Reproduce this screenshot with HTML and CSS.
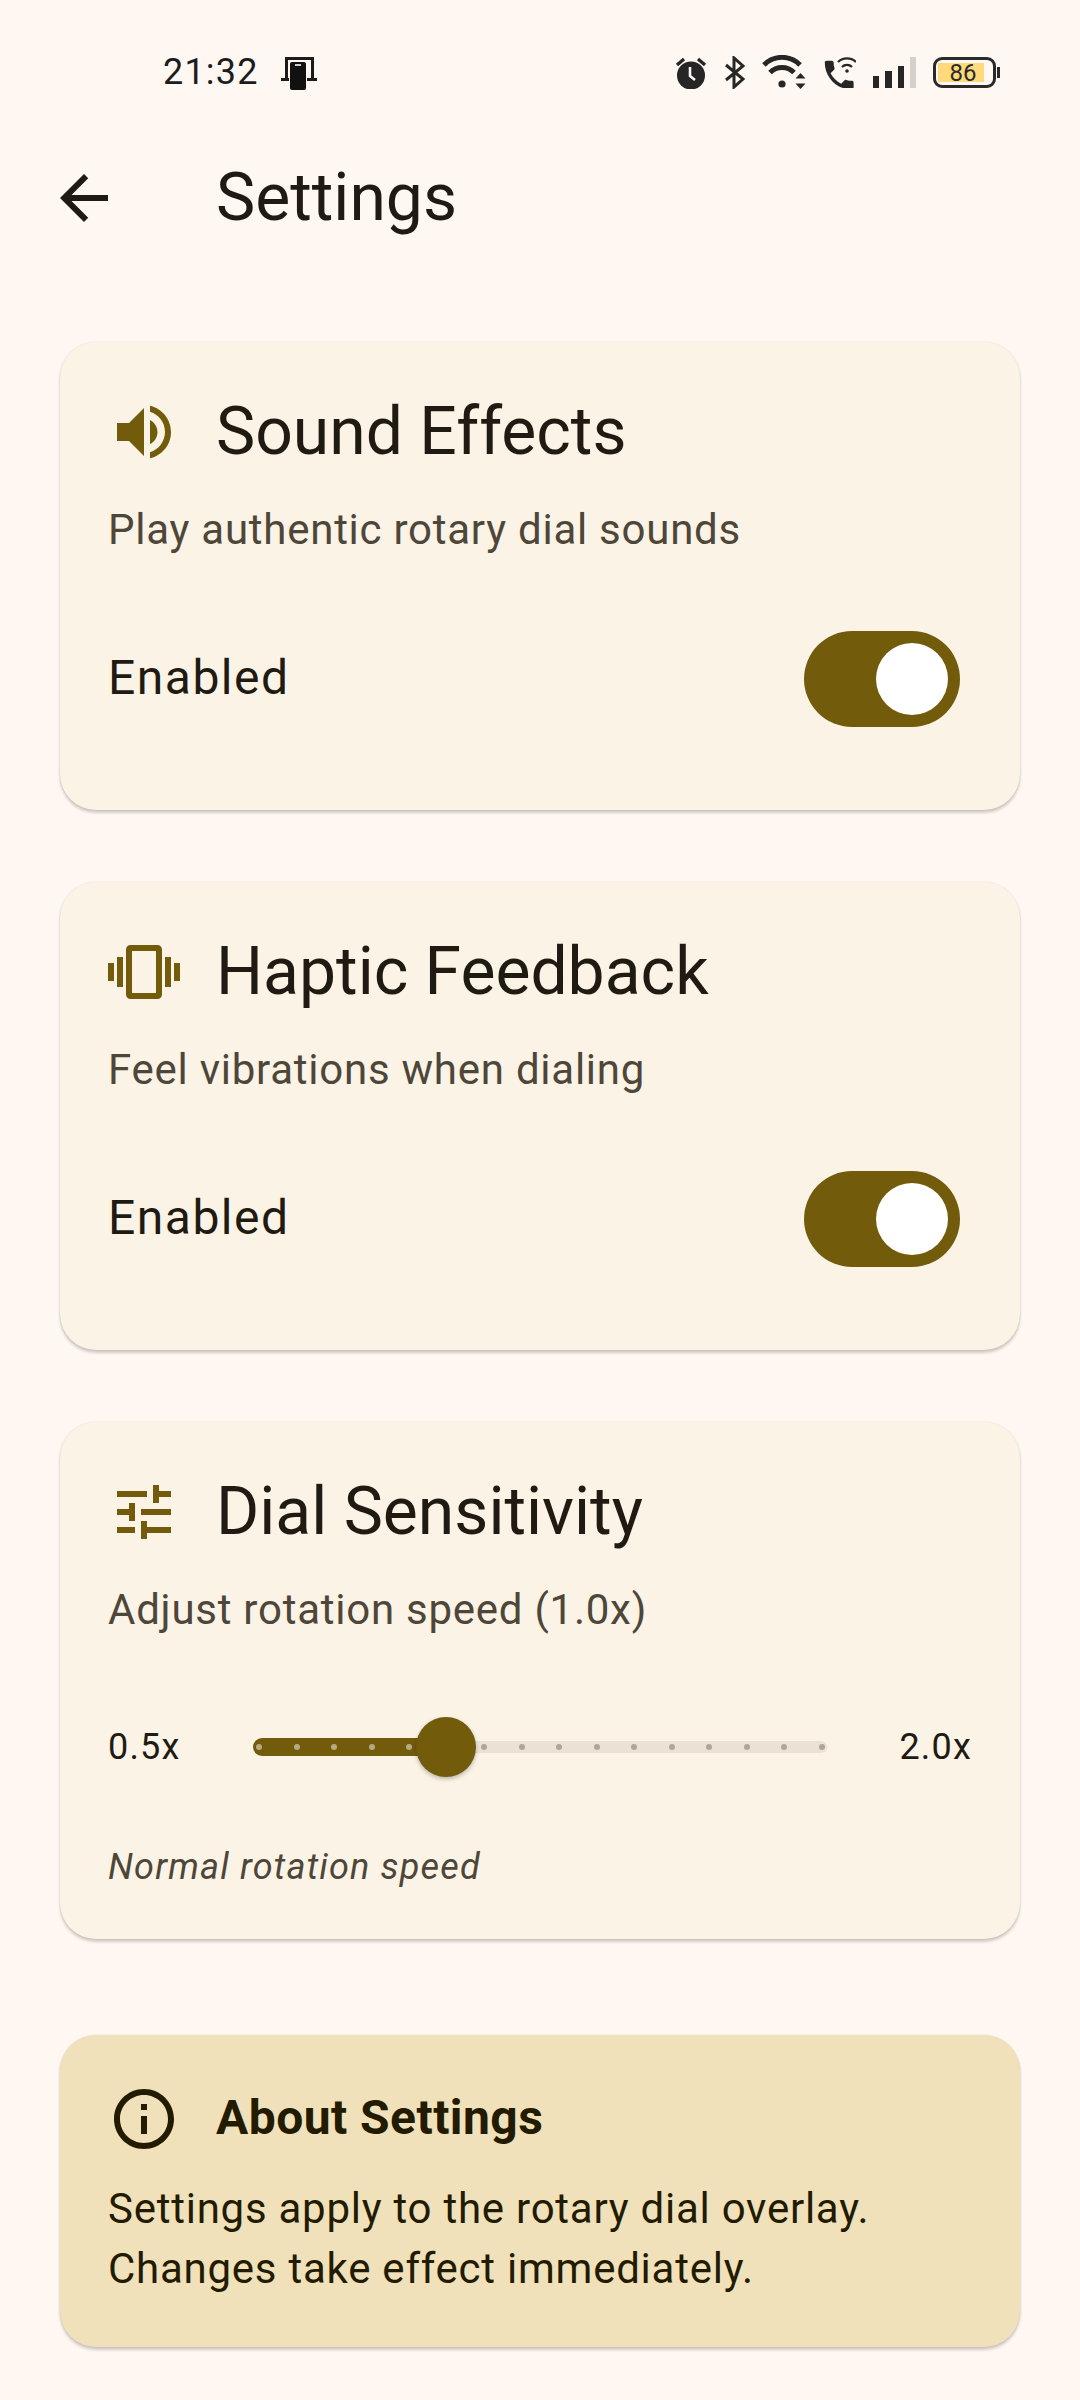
FILE: index.html
```html
<!DOCTYPE html>
<html>
<head>
    <meta charset="UTF-8">
    <title>Settings</title>
    <link rel="stylesheet" href="styles.css">
</head>
<body>
    <div class="screen">
        <div class="status-bar">
            <div class="status-left">
                <span class="clock">21:32</span>
                <svg class="cast-icon" width="36" height="33" viewBox="0 0 36 33">
                    <path d="M4 0h29v21h3v3H0v-3h4zM7 3v18h23V3z" fill="#1c1c1c"/>
                    <rect x="8" y="4" width="18" height="29" rx="2" fill="#fff8f2"/>
                    <rect x="9" y="5" width="16" height="28" rx="2" fill="#111"/>
                    <rect x="14" y="7" width="6" height="2" fill="#ccc"/>
                </svg>
            </div>
            <div class="status-right">
                <svg width="32" height="33" viewBox="0 0 32 33">
                    <path d="M2 9l7-6M30 9l-7-6" stroke="#262626" stroke-width="3.4" fill="none"/>
                    <circle cx="16" cy="19.500" r="14" fill="#262626"/>
                    <path d="M15 11v9l5 4" stroke="#fff8f2" stroke-width="2.6" fill="none"/>
                </svg>
                <svg width="21" height="33" viewBox="0 0 21 33">
                    <path d="M2 9l17 14-9 8V2l9 8L2 24" stroke="#262626" stroke-width="3" fill="none"/>
                </svg>
                <svg width="44" height="34" viewBox="0 0 44 34">
                    <path d="M2 10a25 25 0 0 1 36 0" stroke="#262626" stroke-width="5" fill="none"/>
                    <path d="M8 17.500a17 17 0 0 1 24 0" stroke="#262626" stroke-width="5" fill="none"/>
                    <circle cx="20" cy="29" r="3.600" fill="#262626"/>
                    <path d="M38.500 18l5 5.500h-10zM38.500 34l5-5.500h-10z" fill="#262626"/>
                </svg>
                <svg width="33" height="31" viewBox="0 0 33 31">
                    <path transform="translate(-3 -1) scale(1.6)" d="M6.620 10.790c1.440 2.830 3.760 5.140 6.590 6.590l2.200-2.200c.27-.27.67-.36 1.020-.24 1.120.37 2.330.57 3.570.57.55 0 1 .45 1 1V20c0 .55-.45 1-1 1-9.390 0-17-7.610-17-17 0-.55.45-1 1-1h3.500c.55 0 1 .45 1 1 0 1.250.2 2.450.57 3.570.11.35.03.74-.25 1.020l-2.200 2.200z" fill="#262626"/>
                    <path d="M15 5a13 13 0 0 1 18 0M19 10a7 7 0 0 1 10 0" stroke="#262626" stroke-width="2.400" fill="none"/>
                    <circle cx="24" cy="14" r="1.800" fill="#262626"/>
                </svg>
                <div class="signal">
                    <span class="bar bar-1"></span>
                    <span class="bar bar-2"></span>
                    <span class="bar bar-3"></span>
                    <span class="bar bar-4"></span>
                </div>
                <div class="battery">
                    <div class="battery-body">
                        <div class="battery-fill" style="width: 46px">86</div>
                    </div>
                    <span class="battery-cap"></span>
                </div>
            </div>
        </div>

        <div class="app-bar">
            <svg class="back-icon" width="72" height="72" viewBox="0 0 24 24">
                <path d="M20 11H7.830l5.590-5.590L12 4l-8 8 8 8 1.410-1.410L7.830 13H20v-2z"/>
            </svg>
            <span class="app-title">Settings</span>
        </div>

        <div class="content">
            <div class="card">
                <div class="card-header">
                    <svg class="card-icon" width="72" height="72" viewBox="0 0 24 24">
                        <path d="M3 9v6h4l5 5V4L7 9H3zm13.500 3c0-1.770-1.020-3.290-2.500-4.030v8.050c1.480-.73 2.500-2.250 2.500-4.020zM14 3.230v2.060c2.890.86 5 3.540 5 6.710s-2.110 5.850-5 6.710v2.060c4.010-.91 7-4.490 7-8.770s-2.990-7.860-7-8.770z"/>
                    </svg>
                    <span class="card-title">Sound Effects</span>
                </div>
                <div class="card-sub">Play authentic rotary dial sounds</div>
                <div class="toggle-row">
                    <span class="toggle-label">Enabled</span>
                    <div class="switch"><span class="switch-thumb"></span></div>
                </div>
            </div>

            <div class="card">
                <div class="card-header">
                    <svg class="card-icon" width="72" height="72" viewBox="0 0 24 24">
                        <path d="M0 15h2V9H0v6zm3 2h2V7H3v10zm19-8v6h2V9h-2zm-3 8h2V7h-2v10zM16.500 3h-9C6.670 3 6 3.670 6 4.500v15c0 .83.67 1.500 1.500 1.500h9c.83 0 1.500-.67 1.500-1.500v-15c0-.83-.67-1.500-1.500-1.500zM16 19H8V5h8v14z"/>
                    </svg>
                    <span class="card-title">Haptic Feedback</span>
                </div>
                <div class="card-sub">Feel vibrations when dialing</div>
                <div class="toggle-row">
                    <span class="toggle-label">Enabled</span>
                    <div class="switch"><span class="switch-thumb"></span></div>
                </div>
            </div>

            <div class="card card-slider">
                <div class="card-header">
                    <svg class="card-icon" width="72" height="72" viewBox="0 0 24 24">
                        <path d="M3 17v2h6v-2H3zM3 5v2h10V5H3zm10 16v-2h8v-2h-8v-2h-2v6h2zM7 9v2H3v2h4v2h2V9H7zm14 4v-2H11v2h10zm-6-4h2V7h4V5h-4V3h-2v6z"/>
                    </svg>
                    <span class="card-title">Dial Sensitivity</span>
                </div>
                <div class="card-sub">Adjust rotation speed (1.0x)</div>
                <div class="slider-row">
                    <span class="slider-label">0.5x</span>
                    <div class="slider">
                        <div class="track-active">
                            <span class="tick"></span>
                            <span class="tick"></span>
                            <span class="tick"></span>
                            <span class="tick"></span>
                            <span class="tick"></span>
                        </div>
                        <div class="track-rest">
                            <span class="tick"></span>
                            <span class="tick"></span>
                            <span class="tick"></span>
                            <span class="tick"></span>
                            <span class="tick"></span>
                            <span class="tick"></span>
                            <span class="tick"></span>
                            <span class="tick"></span>
                            <span class="tick"></span>
                            <span class="tick"></span>
                        </div>
                        <span class="slider-thumb"></span>
                    </div>
                    <span class="slider-label">2.0x</span>
                </div>
                <div class="slider-note">Normal rotation speed</div>
            </div>

            <div class="card info-card">
                <div class="info-header">
                    <svg class="info-icon" width="72" height="72" viewBox="0 0 24 24">
                        <path d="M11 7h2v2h-2zm0 4h2v6h-2zm1-9C6.480 2 2 6.480 2 12s4.480 10 10 10 10-4.480 10-10S17.520 2 12 2zm0 18c-4.410 0-8-3.590-8-8s3.590-8 8-8 8 3.590 8 8-3.590 8-8 8z"/>
                    </svg>
                    <span class="info-title">About Settings</span>
                </div>
                <div class="info-text">Settings apply to the rotary dial overlay.<br>Changes take effect immediately.</div>
            </div>
        </div>
    </div>
</body>
</html>
```

FILE: styles.css
```css
* {
    box-sizing: border-box;
}

body {
    margin: 0;
    background-color: #fff8f2;
    font-family: Roboto, sans-serif;
    color: #1f1b13;
}

.screen {
    width: 1080px;
    height: 2400px;
    overflow: hidden;
}

/* status bar */
.status-bar {
    height: 102px;
    padding: 48px 80px 0 163px;
    display: flex;
    justify-content: space-between;
    align-items: flex-start;
}

.status-left {
    height: 48px;
    display: flex;
    align-items: center;
    gap: 22px;
}

.clock {
    font-size: 36px;
    letter-spacing: 1.200px;
    color: #1c1c1c;
}

.cast-icon {
    margin-top: 3px;
}

.status-right {
    height: 48px;
    display: flex;
    align-items: center;
    gap: 17px;
}

.signal {
    width: 43px;
    height: 31px;
    display: flex;
    align-items: flex-end;
    gap: 6px;
}

.bar {
    width: 6.500px;
    background-color: #262626;
}

.bar-1 { height: 12px; }
.bar-2 { height: 17px; }
.bar-3 { height: 22px; }
.bar-4 { height: 31px; background-color: #d4d0ca; }

.battery {
    display: flex;
    align-items: center;
    gap: 1px;
}

.battery-body {
    width: 63px;
    height: 31px;
    padding: 3px 2px;
    border: 3px solid #2a2a2a;
    border-radius: 9px;
}

.battery-fill {
    height: 100%;
    padding-left: 4px;
    background-color: #ffd97a;
    font-size: 24px;
    line-height: 20px;
    text-align: center;
    color: #2a2a2a;
}

.battery-cap {
    width: 3px;
    height: 11px;
    background-color: #2a2a2a;
}

/* app bar */
.app-bar {
    height: 192px;
    padding-left: 48px;
    display: flex;
    align-items: center;
    gap: 96px;
}

.back-icon {
    fill: #1f1b13;
}

.app-title {
    font-size: 66px;
    line-height: 84px;
}

/* cards */
.content {
    padding: 48px 60px 0;
    display: flex;
    flex-direction: column;
}

.card {
    margin-bottom: 72px;
    padding: 48px;
    background-color: #fbf3e5;
    border-radius: 36px;
    box-shadow: 0 3px 3px rgba(0, 0, 0, 0.18), 0 0 2px rgba(0, 0, 0, 0.12);
}

.card-header {
    height: 84px;
    display: flex;
    align-items: center;
    gap: 36px;
}

.card-icon {
    fill: #725c0c;
    flex: none;
}

.card-title {
    font-size: 66px;
    line-height: 84px;
}

.card-sub {
    margin-top: 26px;
    font-size: 42px;
    line-height: 60px;
    letter-spacing: 0.75px;
    color: #4d4639;
}

.toggle-row {
    margin-top: 71px;
    margin-bottom: 35px;
    padding-right: 12px;
    display: flex;
    justify-content: space-between;
    align-items: center;
}

.toggle-label {
    padding-bottom: 4px;
    font-size: 48px;
    letter-spacing: 1.500px;
}

.switch {
    width: 156px;
    height: 96px;
    padding: 12px;
    display: flex;
    justify-content: flex-end;
    background-color: #725c0c;
    border-radius: 48px;
}

.switch-thumb {
    width: 72px;
    height: 72px;
    background-color: #fff;
    border-radius: 50%;
}

/* slider */
.slider-row {
    height: 144px;
    margin-top: 35px;
    display: flex;
    justify-content: space-between;
    align-items: center;
}

.slider-label {
    font-size: 36px;
    letter-spacing: 1.200px;
}

.slider {
    position: relative;
    width: 574px;
    height: 60px;
    display: flex;
    align-items: center;
}

.track-active {
    width: 194px;
    height: 18px;
    padding-left: 3px;
    display: flex;
    align-items: center;
    gap: 31.500px;
    background-color: #725c0c;
    border-radius: 9px;
}

.track-active .tick {
    background-color: #b8a97f;
}

.track-rest {
    flex: 1;
    height: 12px;
    padding-left: 34px;
    display: flex;
    align-items: center;
    gap: 31.500px;
    background-color: #ebe1d5;
    border-radius: 0 6px 6px 0;
}

.tick {
    width: 6px;
    height: 6px;
    flex: none;
    background-color: #b0a598;
    border-radius: 50%;
}

/* sits on top of both track parts */
.slider-thumb {
    position: absolute;
    top: 0;
    left: 163px;
    width: 60px;
    height: 60px;
    background-color: #725c0c;
    border-radius: 50%;
    box-shadow: 0 2px 4px rgba(0, 0, 0, 0.25);
}

.slider-note {
    margin-top: 24px;
    font-size: 36px;
    line-height: 48px;
    font-style: italic;
    letter-spacing: 1.200px;
    color: #4d4639;
}

/* info card */
.info-card {
    margin-top: 24px;
    margin-bottom: 0;
    background-color: #f0e1bb;
    color: #231b00;
}

.info-header {
    display: flex;
    align-items: center;
    gap: 36px;
}

.info-icon {
    fill: #231b00;
    flex: none;
}

.info-title {
    padding-bottom: 3px;
    font-size: 48px;
    font-weight: 700;
    letter-spacing: 0.450px;
}

.info-text {
    margin-top: 24px;
    font-size: 42px;
    line-height: 60px;
    letter-spacing: 0.750px;
}
```
